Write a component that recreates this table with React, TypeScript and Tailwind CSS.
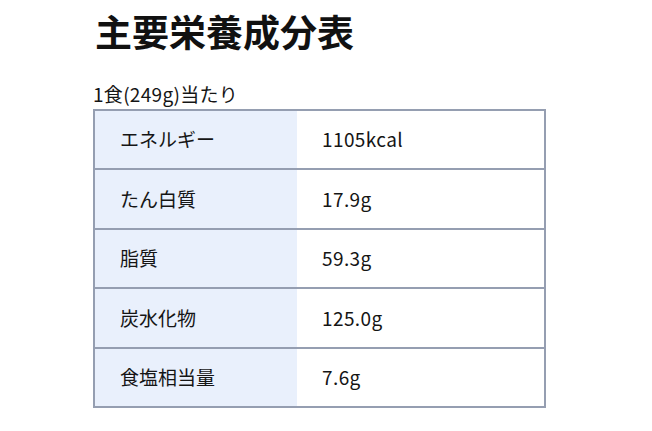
const rows = [
  { label: 'エネルギー', value: '1105kcal' },
  { label: 'たん白質', value: '17.9g' },
  { label: '脂質', value: '59.3g' },
  { label: '炭水化物', value: '125.0g' },
  { label: '食塩相当量', value: '7.6g' },
]

export default function App() {
  return (
    <div
      className="w-[652px] h-[431px] bg-white text-[#151515] pl-[93px] pt-[7px]"
      style={{ fontFamily: '"Noto Sans CJK JP", "Noto Sans", sans-serif' }}
    >
      <h1 className="text-[37px] font-bold leading-[48px] pl-[2px] text-[#111]">主要栄養成分表</h1>
      <div className="mt-[27px] text-[19px] leading-[23px] tracking-[0.3px]">1食(249g)当たり</div>
      <table className="mt-[4px] w-[453px] border-collapse border-2 border-[#959eb1]">
        <tbody>
          {rows.map((r) => (
            <tr key={r.label} className="h-[59.4px] border-b-2 border-[#959eb1]">
              <td className="w-[203px] bg-[#e9f0fc] pl-[25px] text-[19px]">{r.label}</td>
              <td className="bg-white pl-[25px] text-[19px] tracking-[0.4px]">{r.value}</td>
            </tr>
          ))}
        </tbody>
      </table>
    </div>
  )
}
